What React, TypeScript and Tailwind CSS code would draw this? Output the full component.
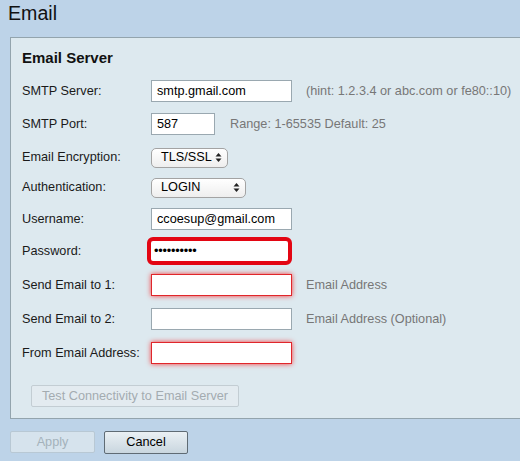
import React from 'react';

const font = { fontFamily: '"Liberation Sans", Arial, Helvetica, sans-serif' };

function Arrows() {
  return (
    <svg width="7" height="11" viewBox="0 0 7 11" className="shrink-0">
      <path d="M3.5 1 L6.5 4.5 L0.5 4.5 Z" fill="#222" />
      <path d="M3.5 10 L6.5 6.5 L0.5 6.5 Z" fill="#222" />
    </svg>
  );
}

function Row({ label, mt, children }: { label: string; mt: string; children: React.ReactNode }) {
  return (
    <div className={`flex items-center h-[22px] ${mt}`}>
      <div className="w-[129px] shrink-0 text-[#1a1a1a]">{label}</div>
      {children}
    </div>
  );
}

function TextBox({ value = '', w = 'w-[141px]', error = false }: { value?: string; w?: string; error?: boolean }) {
  return (
    <div
      className={`${w} h-[22px] bg-white flex items-center px-[5px] text-black ${
        error ? 'border border-[#e0262b] shadow-[0_0_5px_rgba(255,0,0,0.75)]' : 'border border-[#9aa8b0]'
      }`}
    >
      {value}
    </div>
  );
}

function SelectBox({ value, w }: { value: string; w: string }) {
  return (
    <div className={`${w} h-[20px] mt-[1px] rounded-[5px] border border-[#a3a3a3] bg-gradient-to-b from-white to-[#eeeeee] flex items-center justify-between pl-[9px] pr-[5px] text-black`}>
      <span>{value}</span>
      <Arrows />
    </div>
  );
}

export default function App() {
  return (
    <div style={font} className="w-[520px] h-[461px] bg-[#bdd3e8] overflow-hidden text-[12.7px] leading-[15px]">
      <div className="pl-[8px] pt-[2px] text-[19.6px] leading-[23px] text-[#111]">Email</div>

      {/* panel */}
      <div className="ml-[10px] mt-[12px] w-[520px] bg-[#dde9ef] border border-r-0 border-[#93a4ad] pl-[11px] pt-[11px] pb-[11px]">
        <div className="text-[15px] leading-[18px] font-bold text-[#111]">Email Server</div>

        <Row label="SMTP Server:" mt="mt-[13px]">
          <TextBox value="smtp.gmail.com" />
          <span className="ml-[14px] text-[#777]">(hint: 1.2.3.4 or abc.com or fe80::10)</span>
        </Row>

        <Row label="SMTP Port:" mt="mt-[11px]">
          <TextBox value="587" w="w-[64px]" />
          <span className="ml-[15px] text-[#777]">Range: 1-65535 Default: 25</span>
        </Row>

        <Row label="Email Encryption:" mt="mt-[11px]">
          <SelectBox value="TLS/SSL" w="w-[77px]" />
        </Row>

        <Row label="Authentication:" mt="mt-[8px]">
          <SelectBox value="LOGIN" w="w-[95px]" />
        </Row>

        <Row label="Username:" mt="mt-[10px]">
          <TextBox value="ccoesup@gmail.com" />
        </Row>

        <Row label="Password:" mt="mt-[10px]">
          <div className="-ml-[4px] w-[145px] h-[28px] bg-white border-[4px] border-[#e30613] rounded-[6px] flex items-center px-[3px] text-black tracking-[-0.2px]">
            ••••••••••
          </div>
        </Row>

        <Row label="Send Email to 1:" mt="mt-[12px]">
          <TextBox error />
          <span className="ml-[14px] text-[#777]">Email Address</span>
        </Row>

        <Row label="Send Email to 2:" mt="mt-[12px]">
          <TextBox />
          <span className="ml-[14px] text-[#777]">Email Address (Optional)</span>
        </Row>

        <Row label="From Email Address:" mt="mt-[12px]">
          <TextBox error />
        </Row>

        <div className="mt-[21px] ml-[9px] w-[208px] h-[22px] border border-[#c3cdd3] bg-[#e3ebf0] rounded-[2px] flex items-center justify-center text-[#a3abb0]">
          Test Connectivity to Email Server
        </div>
      </div>

      {/* footer buttons */}
      <div className="flex gap-[9px] pl-[10px] mt-[12px]">
        <div className="w-[85px] h-[22px] border border-[#b8c8d4] bg-[#d6e3ed] rounded-[2px] flex items-center justify-center text-[#a4b2bb]">
          Apply
        </div>
        <div className="w-[84px] h-[23px] border border-[#5f6b74] bg-gradient-to-b from-[#eaf0f4] to-[#c9d6df] rounded-[2px] flex items-center justify-center text-black">
          Cancel
        </div>
      </div>
    </div>
  );
}
